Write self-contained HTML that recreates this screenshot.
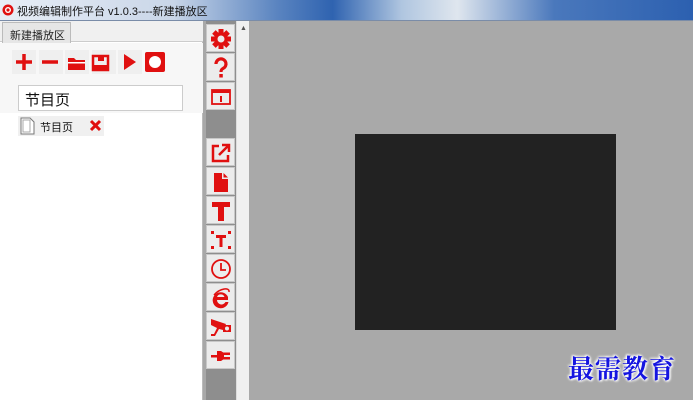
<!DOCTYPE html>
<html><head><meta charset="utf-8"><style>
*{margin:0;padding:0;box-sizing:border-box}
body{width:693px;height:400px;overflow:hidden;position:relative;background:#a9a9a9;font-family:"Liberation Sans","Noto Sans CJK SC",sans-serif}
.abs{position:absolute}
#title{left:0;top:0;width:693px;height:21px;background:linear-gradient(90deg,#e8eef6 0%,#c9d6e8 25%,#5a84c0 40%,#2f63b0 48%,#b0c6e0 58%,#dfe6ee 66%,#4a78bc 80%,#2c60b0 100%);border-bottom:1px solid #7a8ca8}
#title span{position:absolute;left:17px;top:3px;font-size:11px;color:#111;white-space:nowrap}
#left{left:0;top:21px;width:203px;height:379px;background:#fff;border-right:1px solid #bbb}
.tb{position:absolute;left:206px;width:29px;height:28px;background:#ececec;border:1px solid #c8c8c8}
.tb svg{position:absolute;left:3px;top:3px}
</style></head><body>
<div id="title" class="abs">
<svg class="abs" style="left:2px;top:4px" width="12" height="12"><circle cx="6" cy="6" r="5.5" fill="#e01010"/><circle cx="6" cy="6" r="3" fill="#fff"/><circle cx="6" cy="6" r="1.6" fill="#e01010"/></svg>
<span>视频编辑制作平台 v1.0.3----新建播放区</span></div>
<div id="left" class="abs">
<div class="abs" style="left:0;top:0;width:203px;height:21px;background:#f0f0f0;border-bottom:1px solid #ccc"></div>
<div class="abs" style="left:2px;top:1px;width:69px;height:21px;background:#e6e6e6;border:1px solid #bbb;border-bottom:none;font-size:11px;color:#222;padding:4px 0 0 7px;white-space:nowrap">新建播放区</div>
<div class="abs" style="left:0;top:22px;width:203px;height:70px;background:#f7f7f7"></div>
<svg class="abs" style="left:12px;top:29px" width="160" height="24">
<rect x="0" y="0" width="24" height="24" fill="#efefef"/><rect x="27" y="0" width="24" height="24" fill="#efefef"/><rect x="53" y="0" width="24" height="24" fill="#efefef"/><rect x="80" y="0" width="24" height="24" fill="#efefef"/><rect x="106" y="0" width="24" height="24" fill="#efefef"/>
<path d="M4 12H20M12 4V20" stroke="#e01010" stroke-width="3.5"/>
<path d="M30 12H46" stroke="#e01010" stroke-width="3.5"/>
<path d="M56 8h6l2 2h9v10h-17z" fill="#e01010"/><rect x="56" y="12" width="17" height="1.5" fill="#fff"/>
<path d="M81 6h15v14h-15z" fill="none" stroke="#e01010" stroke-width="2.5"/><rect x="86" y="6" width="6" height="5" fill="#e01010"/><rect x="81" y="15" width="15" height="5" fill="#e01010"/>
<path d="M112 4L124 12L112 20z" fill="#e01010"/>
<rect x="133" y="2" width="20" height="20" rx="2" fill="#e01010"/><circle cx="143" cy="12" r="6" fill="#fff"/>
</svg>
<div class="abs" style="left:18px;top:64px;width:165px;height:26px;background:#fff;border:1px solid #ccc;font-size:15px;padding:3px 0 0 6px;color:#111">节目页</div>
<div class="abs" style="left:18px;top:95px;width:86px;height:20px;background:#f0f0f0"></div>
<svg class="abs" style="left:20px;top:96px" width="16" height="18"><path d="M1 1h9l4 4v12h-13z" fill="#fff" stroke="#777"/><path d="M3 3h7v12h-7z" fill="none" stroke="#aaa"/></svg>
<div class="abs" style="left:40px;top:98px;font-size:11px;color:#111">节目页</div>
<svg class="abs" style="left:89px;top:98px" width="13" height="13"><path d="M2 2L11 11M11 2L2 11" stroke="#e01010" stroke-width="3"/></svg>
</div>
<div class="abs" style="left:203px;top:21px;width:3px;height:379px;background:#a8a8a8"></div>
<div class="abs" style="left:206px;top:21px;width:30px;height:379px;background:#8e8e8e"></div>
<div class="abs" style="left:236px;top:21px;width:13px;height:379px;background:#f0f0f0;border-left:1px solid #ddd"><div style="font-size:7px;color:#555;margin:4px 0 0 3px">▲</div></div>

<div class="tb" style="top:24px"><svg width="22" height="22"><g fill="#e01010" transform="translate(11,11)"><circle r="7"/><rect x="-2.5" y="-10" width="5" height="20"/><rect x="-2.5" y="-10" width="5" height="20" transform="rotate(45)"/><rect x="-2.5" y="-10" width="5" height="20" transform="rotate(90)"/><rect x="-2.5" y="-10" width="5" height="20" transform="rotate(135)"/></g><circle cx="11" cy="11" r="3.5" fill="#ececec"/></svg></div>
<div class="tb" style="top:53px"><svg width="22" height="22"><path d="M6 7a5 5 0 1 1 7 4.5c-1.5.8-2 1.5-2 3.5" fill="none" stroke="#e01010" stroke-width="3.2"/><rect x="9.3" y="17" width="3.5" height="3.5" fill="#e01010"/></svg></div>
<div class="tb" style="top:82px"><svg width="22" height="22"><rect x="2" y="4" width="18" height="14" fill="none" stroke="#e01010" stroke-width="1.8"/><rect x="2" y="4" width="18" height="3" fill="#e01010"/><rect x="10" y="10" width="2" height="6" fill="#e01010"/></svg></div>
<div class="tb" style="top:138px"><svg width="22" height="22"><path d="M9 4H3v15h15v-6" fill="none" stroke="#e01010" stroke-width="2.5"/><path d="M12 3h7v7M19 3L9 13" fill="none" stroke="#e01010" stroke-width="2.5"/></svg></div>
<div class="tb" style="top:167px"><svg width="22" height="22"><path d="M4 2h8v6h6v13h-14z" fill="#e01010"/><path d="M13.5 2l4.5 4.5h-4.5z" fill="#e01010"/></svg></div>
<div class="tb" style="top:196px"><svg width="22" height="22"><path d="M2 2h18v5h-6v14h-6v-14h-6z" fill="#e01010"/></svg></div>
<div class="tb" style="top:225px"><svg width="22" height="22"><g fill="#e01010"><rect x="1" y="2" width="3" height="3"/><rect x="18" y="2" width="3" height="3"/><rect x="1" y="17" width="3" height="3"/><rect x="18" y="17" width="3" height="3"/><path d="M6 6h10v3h-3.5v9h-3v-9h-3.5z"/></g></svg></div>
<div class="tb" style="top:254px"><svg width="22" height="22"><circle cx="11" cy="11" r="9" fill="none" stroke="#e01010" stroke-width="1.8"/><path d="M11 5v7h5" fill="none" stroke="#e01010" stroke-width="1.8"/></svg></div>
<div class="tb" style="top:283px"><svg width="22" height="22"><path d="M18 13H7a4.5 4.5 0 0 0 8.5 2h3A8 8 0 1 1 18 10z M7 10h7.5a4 4 0 0 0-7.5 0" fill="#e01010" fill-rule="evenodd"/><path d="M4 8C10 1 20 0 19 5" fill="none" stroke="#e01010" stroke-width="1.5"/></svg></div>
<div class="tb" style="top:312px"><svg width="22" height="22"><path d="M1 3l15 5-3 6-4-1-4 7h-4v-2h3l3-6-6-3z" fill="#e01010"/><rect x="13" y="9" width="8" height="7" fill="#e01010"/><circle cx="17" cy="12.5" r="2" fill="#ececec"/></svg></div>
<div class="tb" style="top:341px"><svg width="22" height="22"><g fill="#e01010"><rect x="1" y="10" width="7" height="2.5"/><path d="M7 6h4l3 2v6l-3 2h-4z"/><rect x="13" y="7.5" width="7" height="2.5"/><rect x="13" y="12" width="7" height="2.5"/></g></svg></div>

<div class="abs" style="left:355px;top:134px;width:261px;height:196px;background:#222"></div>
<div class="abs" style="left:568px;top:349px;font-size:26px;font-family:'Noto Serif CJK SC',serif;color:#1515e0;font-weight:bold;text-shadow:0 0 2px #fff,0 0 3px #fff,1px 1px 2px #fff,-1px -1px 2px #fff;letter-spacing:1px">最需教育</div>
</body></html>
